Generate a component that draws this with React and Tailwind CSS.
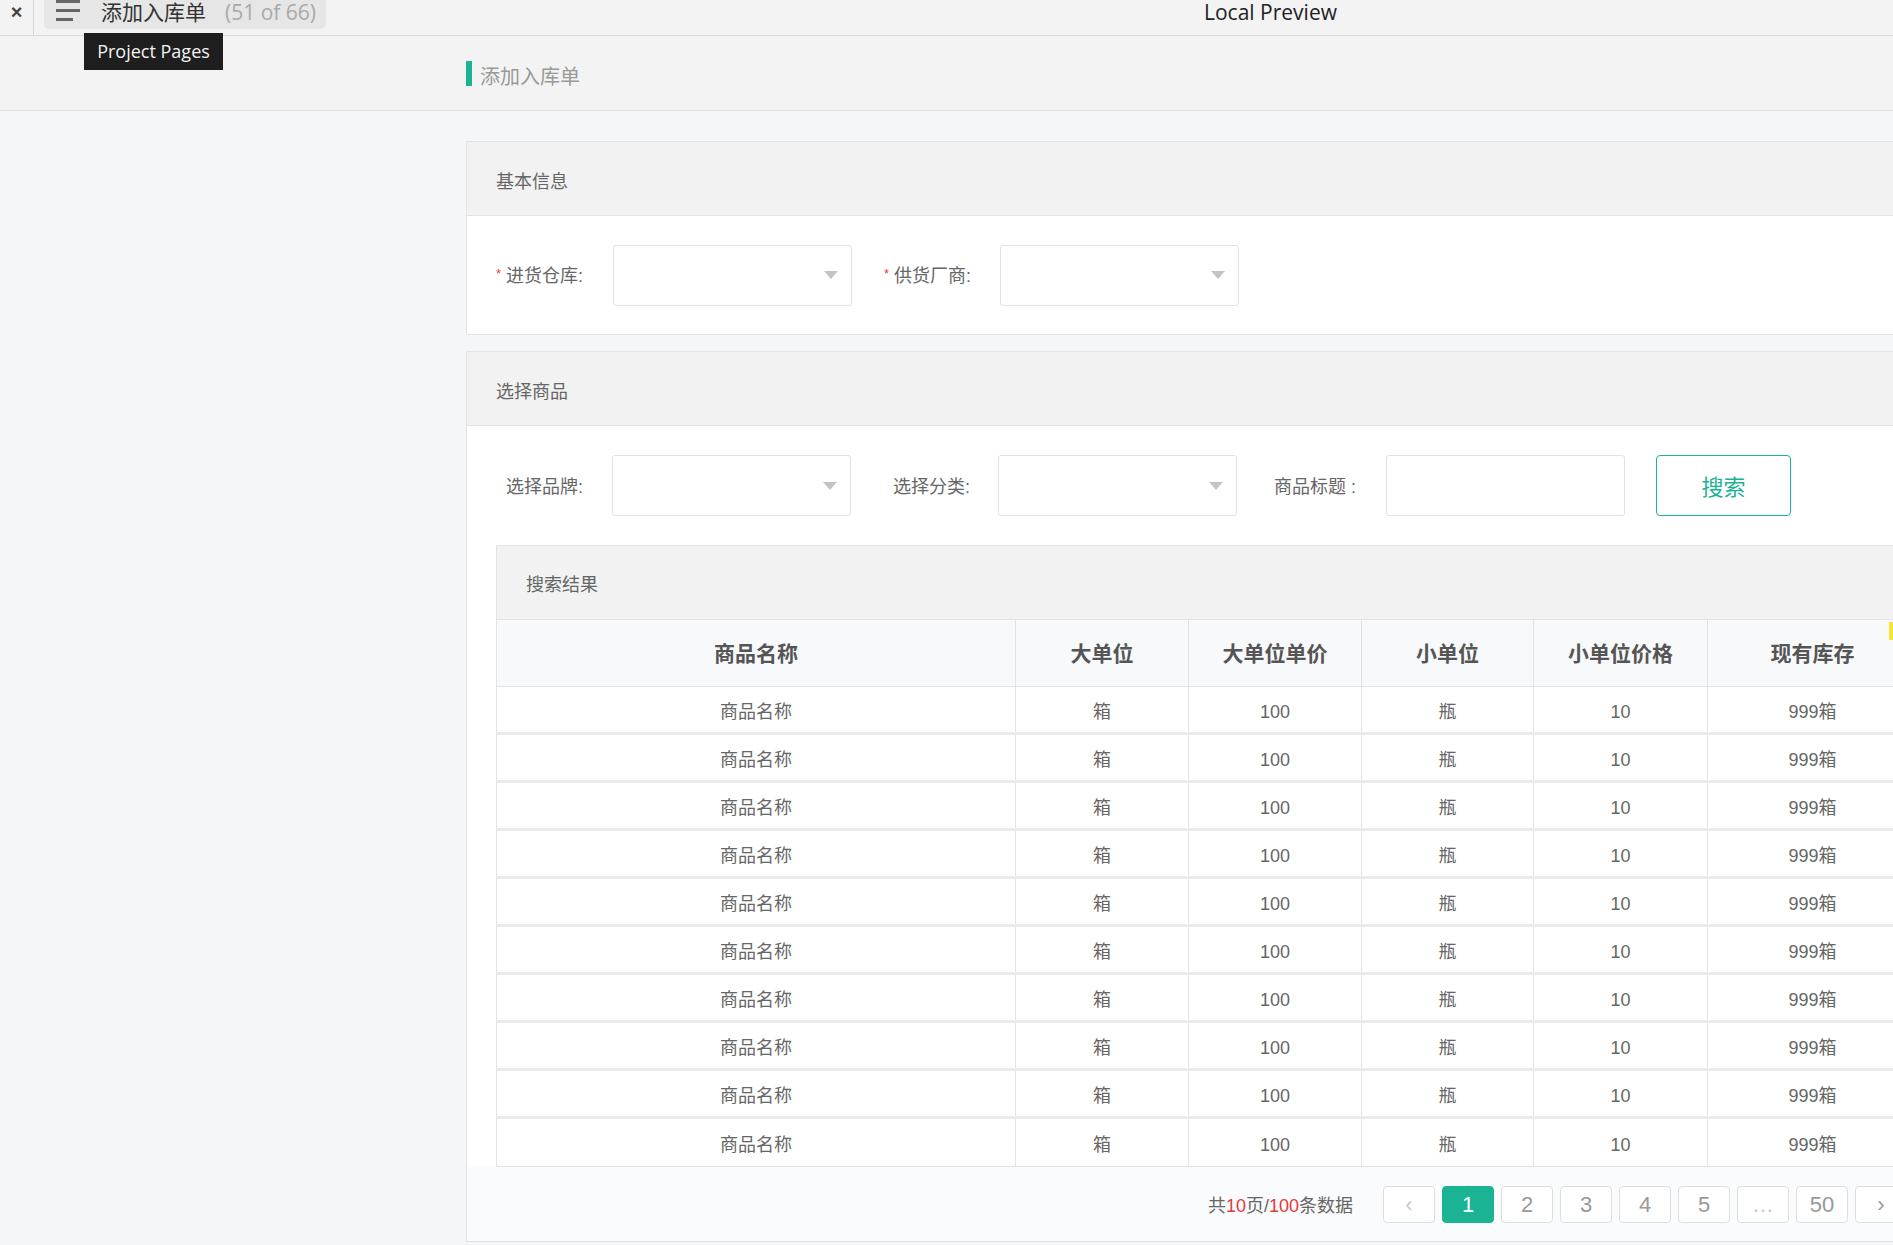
import React from "react";

const FONT = { fontFamily: '"Liberation Sans", "Noto Sans CJK SC", sans-serif' };

const rows = Array.from({ length: 10 }, () => ({
  name: "商品名称",
  big: "箱",
  bigPrice: "100",
  small: "瓶",
  smallPrice: "10",
  stock: "999箱",
}));

function Caret() {
  return (
    <svg width="14" height="8" viewBox="0 0 14 8" className="shrink-0">
      <path d="M0 0 H14 L7 8 Z" fill="#c4c4c4" />
    </svg>
  );
}

function SelectBox() {
  return (
    <div className="flex h-[61px] w-[239px] items-center justify-end rounded-[3px] border border-[#e2e2e2] bg-white pr-[13px]">
      <Caret />
    </div>
  );
}

function Field({ label, required, children, labelClass }) {
  return (
    <div className="flex items-center">
      <span className={`pt-[2px] text-[18px] leading-none text-[#666] ${labelClass}`}>
        {required && <span className="mr-[5px] align-top text-[13px] text-[#e4393c]">*</span>}
        {label}
      </span>
      {children}
    </div>
  );
}

function CardHeader({ title }) {
  return (
    <div className="flex h-[74px] items-center border-b border-[#e3e3e3] bg-[#f2f2f2] pl-[29px] pt-[7px] text-[18px] text-[#666]">
      {title}
    </div>
  );
}

function Pager({ children, active, muted }) {
  return (
    <div
      className={
        "flex h-[37px] w-[52px] items-center justify-center rounded-[4px] border text-[22px] " +
        (active
          ? "border-[#1ab394] bg-[#1ab394] text-white"
          : "border-[#dedede] bg-white " + (muted ? "text-[#c8c8c8]" : "text-[#999]"))
      }
    >
      {children}
    </div>
  );
}

export default function App() {
  const cols = "grid grid-cols-[519px_173px_173px_172px_174px_209px]";
  return (
    <div className="relative h-[1245px] w-[1893px] overflow-hidden bg-[#f5f6f8]" style={FONT}>
      {/* top bar */}
      <div className="flex h-[36px] items-start border-b border-[#d9d9d9] bg-[#f3f3f3]">
        <div className="flex h-[35px] w-[34px] items-start justify-center border-r border-[#d6d6d6] pt-[2px] text-[20px] font-bold leading-none text-[#444]">
          ×
        </div>
        <div className="ml-[10px] flex h-[29px] w-[282px] items-center rounded-b-[5px] bg-[#e6e6e6]">
          <div className="ml-[12px] flex w-[24px] flex-col gap-[6px] self-start">
            <span className="h-[3px] w-[24px] bg-[#666]" />
            <span className="h-[3px] w-[24px] bg-[#666]" />
            <span className="h-[3px] w-[17px] bg-[#666]" />
          </div>
          <span className="ml-[21px] -mt-[4px] text-[21px] leading-none text-[#333]">添加入库单</span>
          <span
            className="ml-[19px] -mt-[4px] text-[21px] leading-none text-[#aaa]"
            style={{ fontFamily: '"Open Sans", sans-serif' }}
          >
            (51 of 66)
          </span>
        </div>
        <span
          className="ml-[878px] text-[21px] leading-[24px] text-[#222]"
          style={{ fontFamily: '"Open Sans", sans-serif' }}
        >
          Local Preview
        </span>
      </div>

      {/* tooltip */}
      <div
        className="absolute left-[84px] top-[33px] z-10 flex h-[37px] w-[139px] items-center justify-center bg-[#1e1e1e] text-[18px] text-[#f2f2f2]"
        style={{ fontFamily: '"Open Sans", sans-serif' }}
      >
        Project Pages
      </div>

      {/* page title */}
      <div className="flex h-[75px] items-center border-b border-[#e0e0e0] bg-[#f3f3f3] pl-[466px]">
        <span className="h-[25px] w-[6px] bg-[#1ab394]" />
        <span className="ml-[8px] pt-[7px] text-[20px] leading-none text-[#999]">添加入库单</span>
      </div>

      <div className="flex flex-col gap-[16px] pl-[466px] pt-[30px]">
        {/* 基本信息 */}
        <div className="w-[1480px] border border-[#e3e3e3] bg-white">
          <CardHeader title="基本信息" />
          <div className="flex h-[118px] items-center pl-[29px]">
            <Field label="进货仓库:" required labelClass="w-[117px]">
              <SelectBox />
            </Field>
            <Field label="供货厂商:" required labelClass="ml-[32px] w-[116px]">
              <SelectBox />
            </Field>
          </div>
        </div>

        {/* 选择商品 */}
        <div className="w-[1480px] border border-[#e3e3e3] bg-white">
          <CardHeader title="选择商品" />
          <div className="flex items-center pl-[39px] pt-[29px]">
            <Field label="选择品牌:" labelClass="w-[106px]">
              <SelectBox />
            </Field>
            <Field label="选择分类:" labelClass="ml-[42px] w-[105px]">
              <SelectBox />
            </Field>
            <Field label="商品标题 :" labelClass="ml-[37px] w-[112px]">
              <div className="h-[61px] w-[239px] rounded-[3px] border border-[#e2e2e2] bg-white" />
            </Field>
            <button className="ml-[31px] flex h-[61px] w-[135px] items-center justify-center rounded-[4px] border border-[#1ab394] bg-white pt-[3px] text-[22px] text-[#1ab394]">
              搜索
            </button>
          </div>

          {/* 搜索结果 */}
          <div className="ml-[29px] mt-[29px] w-[1420px] border-l border-t border-[#e3e3e3]">
            <div className="flex h-[74px] items-center border-b border-[#e3e3e3] bg-[#f2f2f2] pl-[29px] pt-[6px] text-[18px] text-[#666]">
              搜索结果
            </div>
            <div className={`${cols} h-[67px] border-b border-[#e2e2e2] bg-[#f8f9fb] text-[21px] font-bold text-[#555]`}>
              {["商品名称", "大单位", "大单位单价", "小单位", "小单位价格", "现有库存"].map((h, i) => (
                <div
                  key={h}
                  className={"flex items-center justify-center pt-[2px] " + (i < 5 ? "border-r border-[#e4e4e4]" : "")}
                >
                  {h}
                </div>
              ))}
            </div>
            {rows.map((r, idx) => (
              <div
                key={idx}
                className={`${cols} h-[48px] bg-white text-[18px] text-[#666] ` + (idx < 9 ? "border-b-[3px] border-[#ebebeb]" : "border-b border-[#e0e0e0]")}
              >
                {[r.name, r.big, r.bigPrice, r.small, r.smallPrice, r.stock].map((v, i) => (
                  <div
                    key={i}
                    className={"flex items-center justify-center pt-[6px] " + (i < 5 ? "border-r border-[#e4e4e4]" : "")}
                  >
                    {v}
                  </div>
                ))}
              </div>
            ))}
          </div>

          {/* pagination */}
          <div className="flex h-[74px] items-center justify-end bg-[#fafbfc] pr-[38px]">
            <span className="mr-[30px] pt-[4px] text-[18px] text-[#666]">
              共<span className="text-[#e4393c]">10</span>页/<span className="text-[#e4393c]">100</span>条数据
            </span>
            <div className="flex gap-[7px]">
              <Pager muted>‹</Pager>
              <Pager active>1</Pager>
              <Pager>2</Pager>
              <Pager>3</Pager>
              <Pager>4</Pager>
              <Pager>5</Pager>
              <Pager muted>…</Pager>
              <Pager>50</Pager>
              <Pager>›</Pager>
            </div>
          </div>
        </div>
      </div>

      {/* small yellow marker at the right edge */}
      <div className="absolute left-[1889px] top-[622px] h-[18px] w-[4px] bg-[#f5e33a]" />
    </div>
  );
}
